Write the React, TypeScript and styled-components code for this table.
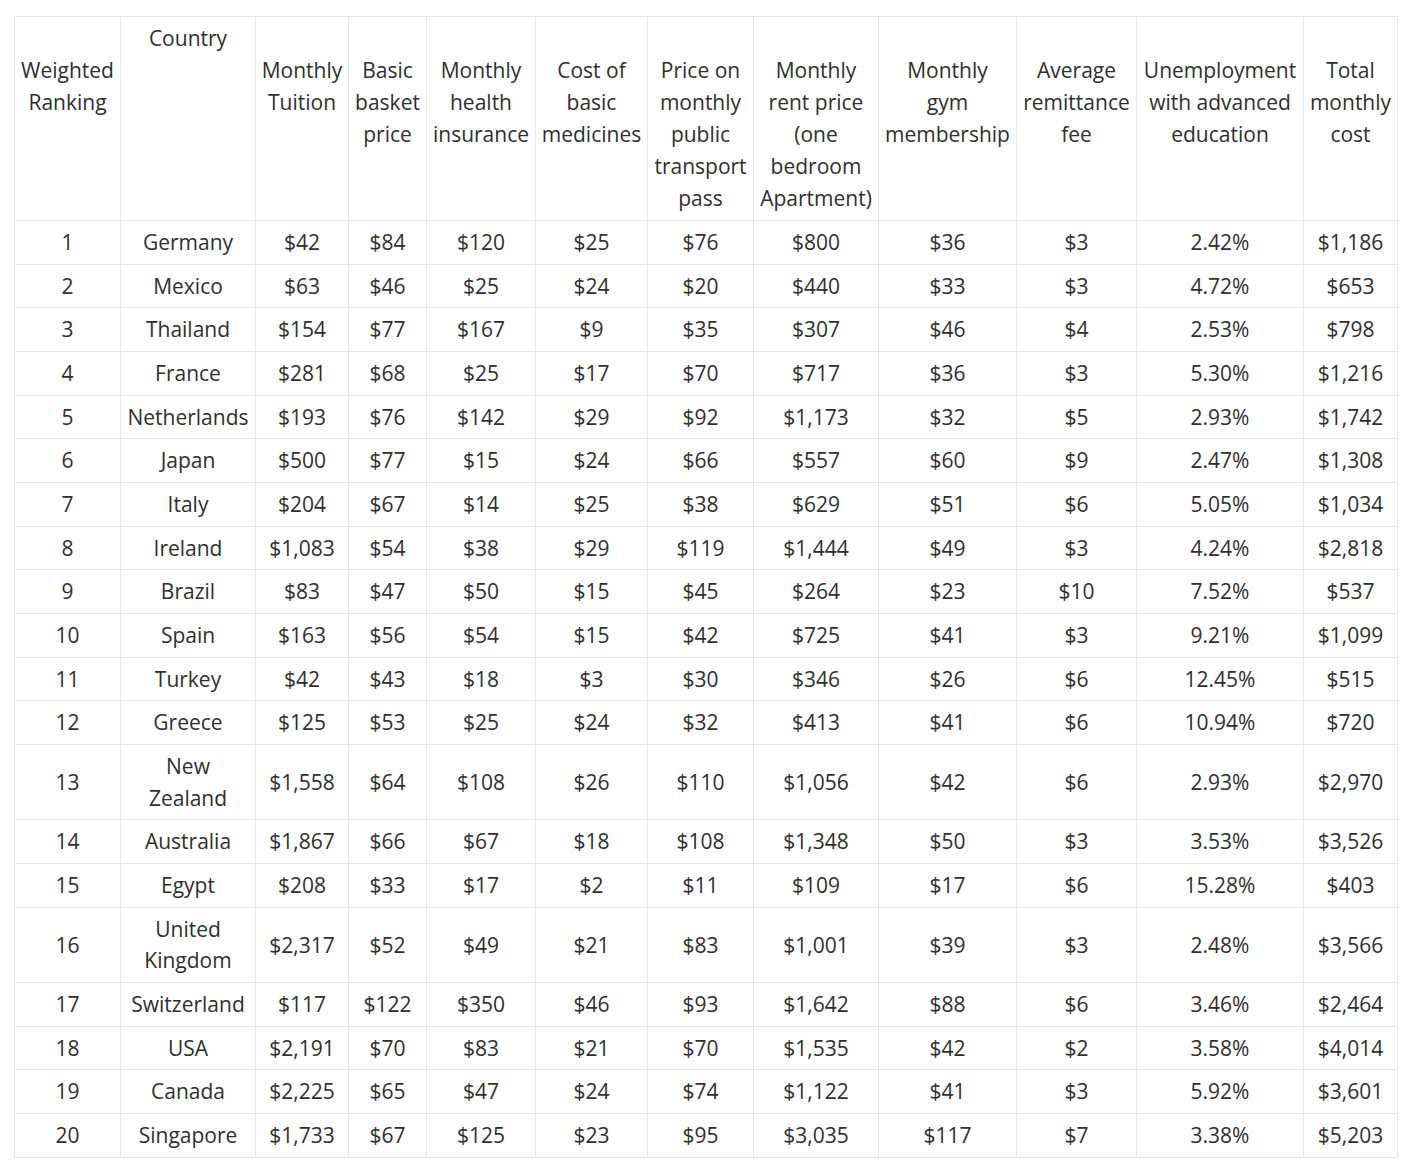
import styled, { createGlobalStyle } from 'styled-components';

const GlobalStyle = createGlobalStyle`
  html, body {
    margin: 0;
    padding: 0;
    background: #ffffff;
  }
  body {
    font-family: 'Open Sans', 'Noto Sans', sans-serif;
    color: #2f2f2f;
  }
`;

const columns = [
  { width: 106, head: ['Weighted', 'Ranking'], lead: true },
  { width: 135, head: ['Country'], lead: false },
  { width: 93, head: ['Monthly', 'Tuition'], lead: true },
  { width: 78, head: ['Basic', 'basket', 'price'], lead: true },
  { width: 109, head: ['Monthly', 'health', 'insurance'], lead: true },
  { width: 112, head: ['Cost of', 'basic', 'medicines'], lead: true },
  { width: 106, head: ['Price on', 'monthly', 'public', 'transport', 'pass'], lead: true },
  { width: 125, head: ['Monthly', 'rent price', '(one', 'bedroom', 'Apartment)'], lead: true },
  { width: 138, head: ['Monthly', 'gym', 'membership'], lead: true },
  { width: 120, head: ['Average', 'remittance', 'fee'], lead: true },
  { width: 167, head: ['Unemployment', 'with advanced', 'education'], lead: true },
  { width: 94, head: ['Total', 'monthly', 'cost'], lead: true },
];

const rows: string[][] = [
  ['1', 'Germany', '$42', '$84', '$120', '$25', '$76', '$800', '$36', '$3', '2.42%', '$1,186'],
  ['2', 'Mexico', '$63', '$46', '$25', '$24', '$20', '$440', '$33', '$3', '4.72%', '$653'],
  ['3', 'Thailand', '$154', '$77', '$167', '$9', '$35', '$307', '$46', '$4', '2.53%', '$798'],
  ['4', 'France', '$281', '$68', '$25', '$17', '$70', '$717', '$36', '$3', '5.30%', '$1,216'],
  ['5', 'Netherlands', '$193', '$76', '$142', '$29', '$92', '$1,173', '$32', '$5', '2.93%', '$1,742'],
  ['6', 'Japan', '$500', '$77', '$15', '$24', '$66', '$557', '$60', '$9', '2.47%', '$1,308'],
  ['7', 'Italy', '$204', '$67', '$14', '$25', '$38', '$629', '$51', '$6', '5.05%', '$1,034'],
  ['8', 'Ireland', '$1,083', '$54', '$38', '$29', '$119', '$1,444', '$49', '$3', '4.24%', '$2,818'],
  ['9', 'Brazil', '$83', '$47', '$50', '$15', '$45', '$264', '$23', '$10', '7.52%', '$537'],
  ['10', 'Spain', '$163', '$56', '$54', '$15', '$42', '$725', '$41', '$3', '9.21%', '$1,099'],
  ['11', 'Turkey', '$42', '$43', '$18', '$3', '$30', '$346', '$26', '$6', '12.45%', '$515'],
  ['12', 'Greece', '$125', '$53', '$25', '$24', '$32', '$413', '$41', '$6', '10.94%', '$720'],
  ['13', 'New\nZealand', '$1,558', '$64', '$108', '$26', '$110', '$1,056', '$42', '$6', '2.93%', '$2,970'],
  ['14', 'Australia', '$1,867', '$66', '$67', '$18', '$108', '$1,348', '$50', '$3', '3.53%', '$3,526'],
  ['15', 'Egypt', '$208', '$33', '$17', '$2', '$11', '$109', '$17', '$6', '15.28%', '$403'],
  ['16', 'United\nKingdom', '$2,317', '$52', '$49', '$21', '$83', '$1,001', '$39', '$3', '2.48%', '$3,566'],
  ['17', 'Switzerland', '$117', '$122', '$350', '$46', '$93', '$1,642', '$88', '$6', '3.46%', '$2,464'],
  ['18', 'USA', '$2,191', '$70', '$83', '$21', '$70', '$1,535', '$42', '$2', '3.58%', '$4,014'],
  ['19', 'Canada', '$2,225', '$65', '$47', '$24', '$74', '$1,122', '$41', '$3', '5.92%', '$3,601'],
  ['20', 'Singapore', '$1,733', '$67', '$125', '$23', '$95', '$3,035', '$117', '$7', '3.38%', '$5,203'],
];

export default function App() {
  return (
    <>
      <GlobalStyle />
      <Page>
        <CostTable>
          <colgroup>
            {columns.map((col, i) => (
              <col key={i} style={{ width: col.width }} />
            ))}
          </colgroup>
          <thead>
            <tr>
              {columns.map((col, i) => (
                <HeadCell key={i} $lead={col.lead}>
                  {col.head.map((line, j) => (
                    <HeadLine key={j}>{line}</HeadLine>
                  ))}
                </HeadCell>
              ))}
            </tr>
          </thead>
          <tbody>
            {rows.map((row, r) => (
              <tr key={r}>
                {row.map((value, c) => (
                  <Cell key={c}>{value}</Cell>
                ))}
              </tr>
            ))}
          </tbody>
        </CostTable>
      </Page>
    </>
  );
}

const Page = styled.div`
  padding: 16px 14px;
`;
const CostTable = styled.table`
  border-collapse: collapse;
  table-layout: fixed;
  width: 1384px;
  font-size: 21px;
  line-height: 31.67px;
`;
const HeadCell = styled.th<{ $lead: boolean }>`
  border: 1px solid #e6e6e6;
  font-weight: 400;
  text-align: center;
  vertical-align: top;
  line-height: 32px;
  padding: ${(p) => (p.$lead ? '37px' : '5px')} 2px 6px;
`;
const HeadLine = styled.span`
  display: block;
  white-space: nowrap;
`;
const Cell = styled.td`
  border: 1px solid #e6e6e6;
  text-align: center;
  vertical-align: middle;
  padding: 6px 2px 5px;
  white-space: pre-line;
`;
